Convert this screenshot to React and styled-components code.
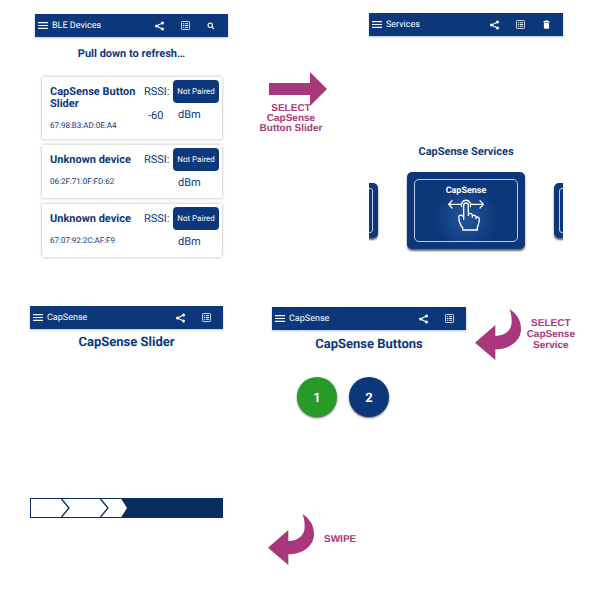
import React, { useState } from "react";
import styled, { createGlobalStyle } from "styled-components";

const NAVY = "#0c387b";
const DEEP_NAVY = "#092c61";
const GREEN = "#279a28";
const MAGENTA = "#a9377b";

const GlobalStyle = createGlobalStyle`
  *, *::before, *::after { box-sizing: border-box; }
  body {
    margin: 0;
    background: #fff;
    color: ${NAVY};
    font-family: Roboto, "Liberation Sans", sans-serif;
    text-rendering: geometricPrecision;
  }
  h1, h2, h3, p { margin: 0; }
  button {
    border: 0;
    padding: 0;
    font-family: inherit;
    color: #fff;
    cursor: pointer;
    text-rendering: inherit;
  }
  svg { display: block; }
`;

const Page = styled.main`
  padding: 13px 0 32px;
`;

const TopRow = styled.div`
  display: grid;
  grid-template-columns: 193fr 141fr 194fr;
  align-items: start;
  padding: 0 37px 0 35px;
`;

const MiddleRow = styled.div`
  display: grid;
  grid-template-columns: 193fr 49fr 194fr 109fr;
  align-items: start;
  padding: 0 25px 0 30px;
  margin-top: 49px;
`;

const BottomRow = styled.div`
  display: grid;
  grid-template-columns: 193fr 45fr 307fr;
  align-items: start;
  padding: 0 25px 0 30px;
  margin-top: 81px;
`;

const Screen = styled.section`
  min-width: 0;
  grid-column: ${(p) => p.$column || "auto"};
  margin-top: ${(p) => p.$drop || 0}px;
`;

const Bar = styled.header`
  display: flex;
  align-items: center;
  height: 23px;
  padding: 0 4px 0 3px;
  background: ${NAVY};
  color: #fff;
  box-shadow: 0 1px 2px rgba(12, 56, 123, 0.3);
`;

const BarTitle = styled.h2`
  flex: 1;
  padding: 1px 0 0 4px;
  font-size: 9px;
  font-weight: 400;
  line-height: 12px;
  white-space: nowrap;
`;

const IconButton = styled.button`
  display: grid;
  place-items: center;
  width: ${(p) => (p.$narrow ? 10 : 26)}px;
  height: 23px;
  background: none;
`;

const Heading = styled.h1`
  font-size: ${(p) => (p.$large ? 13 : 11)}px;
  line-height: 16px;
  font-weight: 700;
  text-align: center;
  margin-top: ${(p) => p.$top}px;
`;

const DeviceList = styled.ul`
  display: grid;
  gap: 6px;
  list-style: none;
  margin: 15px 6px 0 7px;
  padding: 0;
`;

const DeviceCard = styled.li`
  display: grid;
  grid-template-columns: minmax(0, 1fr) 29px 46px;
  padding: 3px 3px 8px 8px;
  min-height: 53px;
  background: #fff;
  box-shadow: 0 0 3px rgba(0, 0, 0, 0.3);
`;

const DeviceInfo = styled.div`
  display: flex;
  flex-direction: column;
  gap: 11px;
  padding-top: 6px;
`;

const DeviceName = styled.h3`
  font-size: 11px;
  line-height: 12px;
  font-weight: 700;
`;

const Address = styled.p`
  font-size: 8px;
  line-height: 10px;
`;

const Signal = styled.div`
  padding-top: 6px;
  font-size: 11px;
  line-height: 12px;
`;

const SignalValue = styled.p`
  margin-top: 12px;
  padding-left: 4px;
`;

const PairColumn = styled.div`
  font-size: 11px;
  line-height: 12px;
`;

const PairButton = styled.button`
  width: 100%;
  height: 23px;
  border-radius: 4px;
  background: ${NAVY};
  font-size: 8px;
`;

const Unit = styled.p`
  margin-top: 6px;
  padding-left: 5px;
`;

const Step = styled.div`
  display: flex;
  flex-direction: column;
  align-items: flex-end;
  justify-self: center;
  padding: 59px 10px 0 0;
`;

const SideStep = styled.div`
  display: flex;
  align-items: center;
  justify-content: flex-end;
  gap: ${(p) => p.$gap}px;
  justify-self: ${(p) => p.$side};
  margin-top: ${(p) => p.$top}px;
  grid-column: ${(p) => p.$column};
`;

const StepText = styled.p`
  color: ${MAGENTA};
  font-family: "Liberation Sans", Arial, sans-serif;
  font-size: 10px;
  line-height: ${(p) => p.$line || 10}px;
  font-weight: 700;
  text-align: center;
  white-space: pre-line;
  padding-right: ${(p) => p.$inset || 0}px;
  margin-top: ${(p) => p.$pull || 0}px;
`;

const Carousel = styled.div`
  display: flex;
  align-items: center;
  justify-content: center;
  gap: 29px;
  overflow: hidden;
  margin-top: 9px;
  padding: 3px 0 7px;
`;

const ServiceCard = styled.button`
  flex: none;
  width: ${(p) => (p.$side ? 85 : 118)}px;
  height: ${(p) => (p.$side ? 55 : 77)}px;
  padding: ${(p) => (p.$side ? 5 : 7)}px;
  border-radius: 5px;
  background: ${NAVY};
  box-shadow: 0 2px 2px rgba(0, 0, 0, 0.6);
`;

const ServiceFrame = styled.span`
  display: flex;
  flex-direction: column;
  align-items: center;
  gap: 2px;
  height: 100%;
  padding-top: 5px;
  border: 1px solid #c3cfe2;
  border-radius: ${(p) => (p.$side ? 3 : 5)}px;
  background: ${(p) =>
    p.$side ? "none" : "radial-gradient(circle at 50% 62%, #245599 0, rgba(12, 56, 123, 0) 32px)"};
  font-size: 9px;
  line-height: 12px;
  font-weight: 700;
`;

const Pads = styled.div`
  display: flex;
  gap: 12px;
  margin-top: 24px;
  padding-left: 25px;
`;

const Pad = styled.button`
  width: 40px;
  height: 40px;
  border-radius: 50%;
  padding-top: 2px;
  background: ${(p) => (p.$active ? GREEN : NAVY)};
  box-shadow: 0 1px 2px rgba(0, 0, 0, 0.6);
  font-size: 13px;
  font-weight: 700;
`;

const SliderTrack = styled.label`
  position: relative;
  display: block;
`;

const SliderInput = styled.input`
  position: absolute;
  inset: 0;
  width: 100%;
  height: 100%;
  margin: 0;
  opacity: 0;
`;

const MenuIcon = () => (
  <svg width="10" height="7" viewBox="0 0 10 7" stroke="#fff" strokeWidth="1.2" aria-hidden="true">
    <path d="M0 0.7H10M0 3.5H10M0 6.3H10" />
  </svg>
);

const ShareIcon = () => (
  <svg width="9" height="10" viewBox="0 0 18 20" fill="#fff" aria-hidden="true">
    <path d="M15 4 3 10l12 6" fill="none" stroke="#fff" strokeWidth="2.4" />
    <circle cx="15" cy="4" r="3" />
    <circle cx="3" cy="10" r="3" />
    <circle cx="15" cy="16" r="3" />
  </svg>
);

const ListIcon = () => (
  <svg width="9" height="9" viewBox="0 0 18 18" fill="none" stroke="#fff" aria-hidden="true">
    <rect x="1" y="1" width="16" height="16" rx="1.5" strokeWidth="1.6" />
    <path d="M4 5.4h2M4 9h2M4 12.6h2M7.5 5.4H14M7.5 9H14M7.5 12.6H14" strokeWidth="1.8" />
  </svg>
);

const SearchIcon = () => (
  <svg width="8" height="8" viewBox="0 0 16 16" fill="none" stroke="#fff" aria-hidden="true">
    <circle cx="6.5" cy="6.5" r="4.4" strokeWidth="2.2" />
    <path d="m9.8 9.8 4.4 4.4" strokeWidth="2.4" />
  </svg>
);

const TrashIcon = () => (
  <svg width="7" height="9" viewBox="0 0 14 18" fill="#fff" aria-hidden="true">
    <path d="M1 2h3.4l1-1.4h3.2l1 1.4H13v2.4H1zM1.8 5.6h10.4v10q0 2-2 2H3.8q-2 0-2-2z" />
  </svg>
);

const SwipeHandIcon = () => (
  <svg
    width="36"
    height="32"
    viewBox="0 0 108 96"
    fill="none"
    stroke="#fff"
    strokeWidth="4"
    strokeLinecap="round"
    strokeLinejoin="round"
    aria-hidden="true"
  >
    <path d="M12 5 2 16l10 11M2 16h36M96 5l10 11-10 11M106 16H70" />
    <path d="M41 23a14 14 0 1 1 26 0" />
    <path d="M47 61V19a7 7 0 0 1 14 0v29M61 49c1-8 11-7 12 0v5M73 53c2-7 11-5 11 2v4M84 57c3-5 10-3 10 3 0 12-4 17-6 26v7H44v-7c-7-7-11-20-12-31 0-8 10-9 15-1" />
  </svg>
);

const StraightArrow = () => (
  <svg width="58" height="34" viewBox="0 0 58 34" fill={MAGENTA} aria-hidden="true">
    <path d="M0 11H41V0L58 17 41 34V23H0z" />
  </svg>
);

const CurvedArrow = () => (
  <svg width="46" height="51" viewBox="28 42 138 153" fill={MAGENTA} aria-hidden="true">
    <path d="M28 143 89 90v33c31-1 49-18 49-43 0-15-2-28-7-38 24 15 35 36 35 60 0 38-37 61-77 61v32z" />
  </svg>
);

const SliderDrawing = () => (
  <svg width="100%" height="20" viewBox="0 0 193 20" preserveAspectRatio="none" aria-hidden="true">
    <rect x="0.5" y="0.5" width="192" height="19" fill="#fff" stroke={DEEP_NAVY} />
    <path
      d="M31.5 1 39 10l-7.5 9M70.5 1l7.5 9-7.5 9"
      fill="none"
      stroke={DEEP_NAVY}
      strokeWidth="1.3"
    />
    <path d="M91 0.5H193v19H91l6-9.5z" fill={DEEP_NAVY} />
  </svg>
);

const ACTIONS = {
  Share: ShareIcon,
  Log: ListIcon,
  Search: SearchIcon,
  Delete: TrashIcon,
};

function AppBar({ title, actions }) {
  return (
    <Bar>
      <IconButton $narrow aria-label="Menu">
        <MenuIcon />
      </IconButton>
      <BarTitle>{title}</BarTitle>
      {actions.map((name) => {
        const Icon = ACTIONS[name];
        return (
          <IconButton key={name} aria-label={name}>
            <Icon />
          </IconButton>
        );
      })}
    </Bar>
  );
}

const DEVICES = [
  { name: "CapSense Button Slider", address: "67:98:B3:AD:0E:A4", rssi: "-60" },
  { name: "Unknown device", address: "06:2F:71:0F:FD:62" },
  { name: "Unknown device", address: "67:07:92:2C:AF:F9" },
];

function Device({ name, address, rssi }) {
  return (
    <DeviceCard>
      <DeviceInfo>
        <DeviceName>{name}</DeviceName>
        <Address>{address}</Address>
      </DeviceInfo>
      <Signal>
        <p>RSSI:</p>
        {rssi && <SignalValue>{rssi}</SignalValue>}
      </Signal>
      <PairColumn>
        <PairButton>Not Paired</PairButton>
        <Unit>dBm</Unit>
      </PairColumn>
    </DeviceCard>
  );
}

export default function App() {
  const [position, setPosition] = useState(47);
  return (
    <>
      <GlobalStyle />
      <Page>
        <TopRow>
          <Screen $drop={1}>
            <AppBar title="BLE Devices" actions={["Share", "Log", "Search"]} />
            <Heading $top={9}>Pull down to refresh…</Heading>
            <DeviceList>
              {DEVICES.map((device) => (
                <Device key={device.address} {...device} />
              ))}
            </DeviceList>
          </Screen>
          <Step>
            <StraightArrow />
            <StepText $inset={5} $pull={-2}>
              {"SELECT\nCapSense\nButton Slider"}
            </StepText>
          </Step>
          <Screen>
            <AppBar title="Services" actions={["Share", "Log", "Delete"]} />
            <Heading $top={108}>CapSense Services</Heading>
            <Carousel>
              <ServiceCard $side aria-label="Previous service">
                <ServiceFrame $side />
              </ServiceCard>
              <ServiceCard>
                <ServiceFrame>
                  CapSense
                  <SwipeHandIcon />
                </ServiceFrame>
              </ServiceCard>
              <ServiceCard $side aria-label="Next service">
                <ServiceFrame $side />
              </ServiceCard>
            </Carousel>
          </Screen>
        </TopRow>
        <MiddleRow>
          <Screen>
            <AppBar title="CapSense" actions={["Share", "Log"]} />
            <Heading $large $top={6}>CapSense Slider</Heading>
          </Screen>
          <Screen $column={3} $drop={1}>
            <AppBar title="CapSense" actions={["Share", "Log"]} />
            <Heading $large $top={7}>CapSense Buttons</Heading>
            <Pads>
              <Pad $active>1</Pad>
              <Pad>2</Pad>
            </Pads>
          </Screen>
          <SideStep $column={4} $side="end" $gap={6} $top={3}>
            <CurvedArrow />
            <StepText $line={11}>{"SELECT\nCapSense\nService"}</StepText>
          </SideStep>
        </MiddleRow>
        <BottomRow>
          <SliderTrack>
            <SliderDrawing />
            <SliderInput
              type="range"
              aria-label="CapSense slider position"
              value={position}
              onChange={(event) => setPosition(Number(event.target.value))}
            />
          </SliderTrack>
          <SideStep $column={3} $side="start" $gap={10} $top={16}>
            <CurvedArrow />
            <StepText>SWIPE</StepText>
          </SideStep>
        </BottomRow>
      </Page>
    </>
  );
}
